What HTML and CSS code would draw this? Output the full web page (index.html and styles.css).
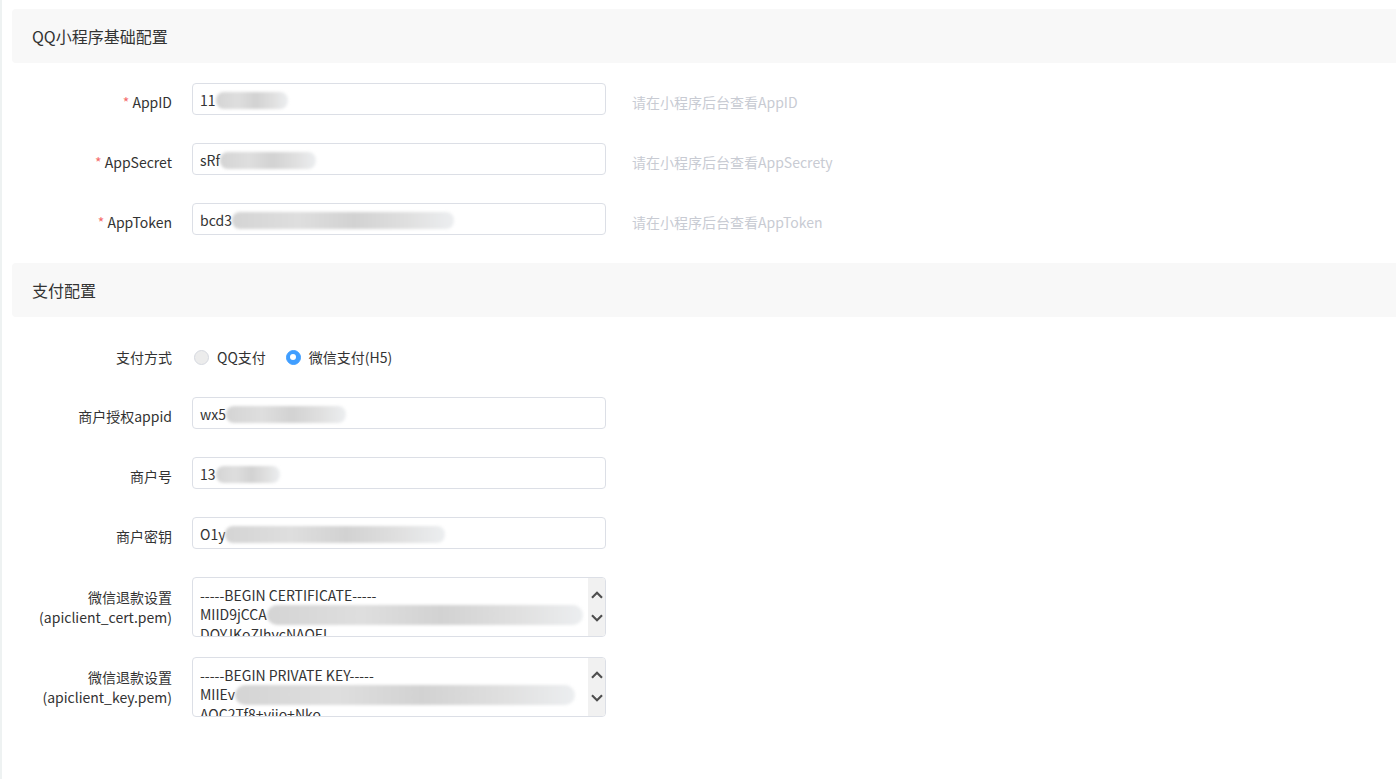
FILE: index.html
```html
<!DOCTYPE html>
<html lang="zh-CN">
<head>
    <meta charset="UTF-8">
    <meta name="viewport" content="width=device-width, initial-scale=1.0">
    <title>QQ小程序配置</title>
    <link rel="stylesheet" href="styles.css">
</head>
<body>
    <div class="page">
        <div class="section-title">QQ小程序基础配置</div>

        <div class="form-item">
            <label class="label"><span class="star">*</span> AppID</label>
            <div class="input">11<span class="mask" style="width: 72px"></span></div>
            <span class="hint">请在小程序后台查看AppID</span>
        </div>
        <div class="form-item">
            <label class="label"><span class="star">*</span> AppSecret</label>
            <div class="input">sRf<span class="mask" style="width: 96px"></span></div>
            <span class="hint">请在小程序后台查看AppSecrety</span>
        </div>
        <div class="form-item">
            <label class="label"><span class="star">*</span> AppToken</label>
            <div class="input">bcd3<span class="mask" style="width: 222px"></span></div>
            <span class="hint">请在小程序后台查看AppToken</span>
        </div>

        <div class="section-title">支付配置</div>

        <div class="form-item radio-item">
            <label class="label">支付方式</label>
            <div class="radios">
                <span class="radio"><i class="dot"></i>QQ支付</span>
                <span class="radio checked"><i class="dot"></i>微信支付(H5)</span>
            </div>
        </div>
        <div class="form-item">
            <label class="label">商户授权appid</label>
            <div class="input">wx5<span class="mask" style="width: 120px"></span></div>
        </div>
        <div class="form-item">
            <label class="label">商户号</label>
            <div class="input">13<span class="mask" style="width: 64px"></span></div>
        </div>
        <div class="form-item">
            <label class="label">商户密钥</label>
            <div class="input">O1y<span class="mask" style="width: 220px"></span></div>
        </div>
        <div class="form-item area-item">
            <label class="label">微信退款设置<br>(apiclient_cert.pem)</label>
            <div class="textarea">
                <div class="text">
                    <div>-----BEGIN CERTIFICATE-----</div>
                    <div>MIID9jCCA<span class="mask" style="width: 316px"></span></div>
                    <div>DQYJKoZIhvcNAQEL</div>
                </div>
                <div class="scrollbar">
                    <svg viewBox="0 0 12 8" width="12" height="8"><path d="M1 6.8 L6 1.8 L11 6.8" fill="none" stroke="#505050" stroke-width="2.2"/></svg>
                    <svg viewBox="0 0 12 8" width="12" height="8"><path d="M1 1.2 L6 6.2 L11 1.2" fill="none" stroke="#505050" stroke-width="2.2"/></svg>
                </div>
            </div>
        </div>
        <div class="form-item area-item">
            <label class="label">微信退款设置<br>(apiclient_key.pem)</label>
            <div class="textarea">
                <div class="text">
                    <div>-----BEGIN PRIVATE KEY-----</div>
                    <div>MIIEv<span class="mask" style="width: 340px"></span></div>
                    <div>AOC2Tf8+yiio+Nko</div>
                </div>
                <div class="scrollbar">
                    <svg viewBox="0 0 12 8" width="12" height="8"><path d="M1 6.8 L6 1.8 L11 6.8" fill="none" stroke="#505050" stroke-width="2.2"/></svg>
                    <svg viewBox="0 0 12 8" width="12" height="8"><path d="M1 1.2 L6 6.2 L11 1.2" fill="none" stroke="#505050" stroke-width="2.2"/></svg>
                </div>
            </div>
        </div>
    </div>
</body>
</html>
```

FILE: styles.css
```css
html, body {
    margin: 0;
    padding: 0;
    background-color: #fff;
}
body {
    font-family: "Noto Sans CJK SC", "Noto Sans", sans-serif;
    font-size: 14px;
    color: #333;
}
.page {
    min-height: 779px;
    box-sizing: border-box;
    border-left: 2px solid #eef2f2;
    padding: 9px 0 0 10px;
}
.section-title {
    height: 54px;
    line-height: 54px;
    padding-left: 20px;
    margin-bottom: 20px;
    background-color: #f8f8f8;
    border-radius: 4px 0 0 4px;
    font-size: 16px;
    color: #333;
}
.form-item {
    display: flex;
    align-items: flex-start;
    margin-bottom: 28px;
}
.label {
    width: 180px;
    height: 32px;
    padding: 3px 20px 0 0;
    box-sizing: border-box;
    text-align: right;
    line-height: 32px;
    color: #333;
    flex-shrink: 0;
}
.star {
    color: #f56c6c;
}
.input {
    width: 414px;
    height: 32px;
    box-sizing: border-box;
    border: 1px solid #dcdfe6;
    border-radius: 4px;
    padding: 1px 7px 0;
    line-height: 30px;
    color: #333;
    white-space: nowrap;
    overflow: hidden;
}
.mask {
    display: inline-block;
    height: 17px;
    vertical-align: middle;
    margin-top: -3px;
    border-radius: 8px;
    background: linear-gradient(90deg, #d4d4d4, #dedede 30%, #d2d2d2 55%, #e0e0e0 80%, #eceef0);
    filter: blur(1.5px);
}
.hint {
    margin-left: 26px;
    height: 32px;
    box-sizing: border-box;
    line-height: 32px;
    padding-top: 3px;
    color: #c8cbd3;
}
.radio-item {
    margin-bottom: 20px;
}
.radio-item .label {
    height: 40px;
    line-height: 40px;
    padding-top: 0;
}
.radios {
    display: flex;
    align-items: center;
    height: 40px;
    padding-left: 2px;
}
.radio {
    display: flex;
    align-items: center;
    margin-right: 20px;
    color: #333;
}
.radio .dot {
    width: 15px;
    height: 15px;
    box-sizing: border-box;
    border: 1px solid #d6d9e0;
    border-radius: 50%;
    background-color: #ececec;
    margin-right: 8px;
    position: relative;
}
.radio.checked .dot {
    background-color: #409eff;
    border-color: #409eff;
}
.radio.checked .dot::after {
    content: '';
    position: absolute;
    left: 50%;
    top: 50%;
    width: 6px;
    height: 6px;
    margin: -3px 0 0 -3px;
    border-radius: 50%;
    background-color: #fff;
}
.area-item {
    margin-bottom: 20px;
}
.area-item .label {
    height: auto;
    line-height: 20px;
    padding-top: 10px;
}
.textarea {
    display: flex;
    width: 414px;
    height: 60px;
    box-sizing: border-box;
    border: 1px solid #dcdfe6;
    border-radius: 4px;
    overflow: hidden;
}
.textarea .text {
    flex: 1;
    padding: 8px 7px 0;
    line-height: 19px;
    white-space: nowrap;
    overflow: hidden;
    color: #333;
}
.textarea .text .mask {
    height: 20px;
    margin-top: -2px;
    border-radius: 10px;
}
.scrollbar {
    width: 17px;
    background-color: #f1f1f1;
    display: flex;
    flex-direction: column;
    align-items: center;
    padding-top: 13px;
    gap: 15px;
}
```
